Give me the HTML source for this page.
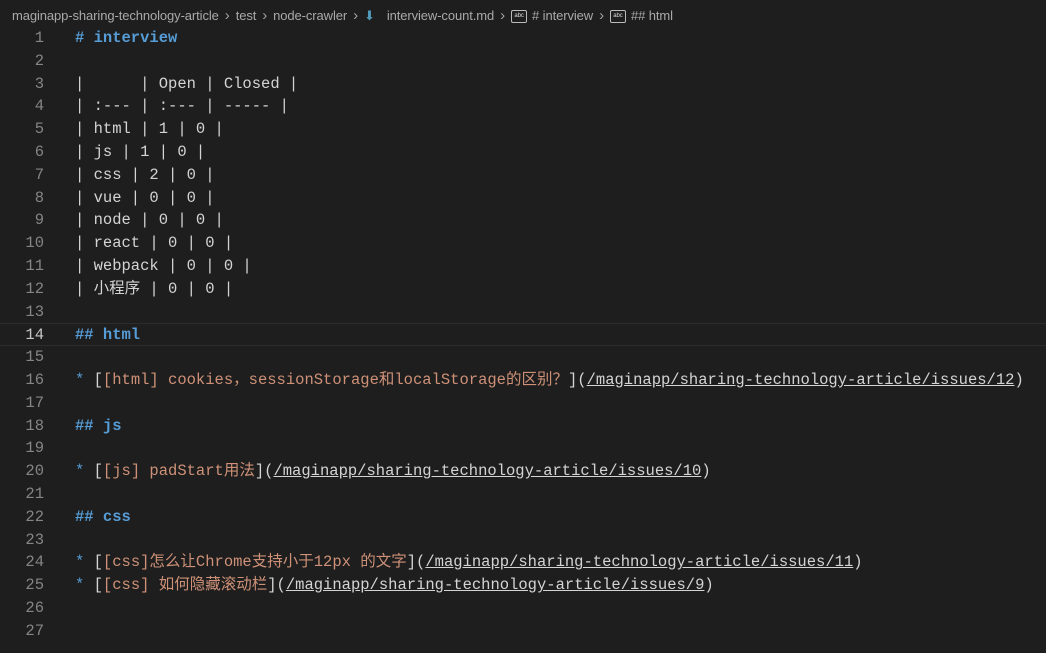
<!DOCTYPE html>
<html><head><meta charset="utf-8"><style>
html,body{margin:0;padding:0;background:#1e1e1e;width:1046px;height:653px;overflow:hidden}
.bc{position:absolute;top:0;left:0;height:30px;width:1046px;font:13px "Liberation Sans",sans-serif;color:#a9a9a9;line-height:31px;padding-left:12px;white-space:nowrap;letter-spacing:-0.1px}
.bc .s{margin:0 6px;color:#a0a0a0;font-size:15px}
.ab{display:inline-block;width:14px;height:11px;border:1px solid #bbb;border-radius:2px;font-size:6px;line-height:11px;text-align:center;vertical-align:middle;margin-right:5px;color:#ddd}
.ed{position:absolute;top:27px;left:0;font:15.5px "Liberation Mono","Noto Sans CJK SC",monospace;}
.l{height:22.8px;line-height:22.8px;position:relative;white-space:pre;color:#d4d4d4}
.n{position:absolute;left:0;width:44px;text-align:right;color:#858585}
.t{position:absolute;left:75px}
.cur{border-top:1px solid #2c2c2c;border-bottom:1px solid #2c2c2c;box-sizing:border-box;width:1046px}
.cur .n{color:#c6c6c6}
.h{color:#569cd6;font-weight:bold}
.o{color:#ce9178}
.u{text-decoration:underline}
.b{color:#569cd6}
</style></head><body>
<div class="bc">maginapp-sharing-technology-article<span class="s">›</span>test<span class="s">›</span>node-crawler<span class="s">›</span><span style="color:#519aba;margin-right:12px">⬇</span>interview-count.md<span class="s">›</span><span class="ab">abc</span># interview<span class="s">›</span><span class="ab">abc</span>## html</div>
<div class="ed">
<div class="l"><span class="n">1</span><span class="t h"># interview</span></div>
<div class="l"><span class="n">2</span></div>
<div class="l"><span class="n">3</span><span class="t">|      | Open | Closed |</span></div>
<div class="l"><span class="n">4</span><span class="t">| :--- | :--- | ----- |</span></div>
<div class="l"><span class="n">5</span><span class="t">| html | 1 | 0 |</span></div>
<div class="l"><span class="n">6</span><span class="t">| js | 1 | 0 |</span></div>
<div class="l"><span class="n">7</span><span class="t">| css | 2 | 0 |</span></div>
<div class="l"><span class="n">8</span><span class="t">| vue | 0 | 0 |</span></div>
<div class="l"><span class="n">9</span><span class="t">| node | 0 | 0 |</span></div>
<div class="l"><span class="n">10</span><span class="t">| react | 0 | 0 |</span></div>
<div class="l"><span class="n">11</span><span class="t">| webpack | 0 | 0 |</span></div>
<div class="l"><span class="n">12</span><span class="t">| 小程序 | 0 | 0 |</span></div>
<div class="l"><span class="n">13</span></div>
<div class="l cur"><span class="n">14</span><span class="t h">## html</span></div>
<div class="l"><span class="n">15</span></div>
<div class="l"><span class="n">16</span><span class="t"><span class="b">*</span> [<span class="o">[html] cookies，sessionStorage和localStorage的区别？</span>](<span class="u">/maginapp/sharing-technology-article/issues/12</span>)</span></div>
<div class="l"><span class="n">17</span></div>
<div class="l"><span class="n">18</span><span class="t h">## js</span></div>
<div class="l"><span class="n">19</span></div>
<div class="l"><span class="n">20</span><span class="t"><span class="b">*</span> [<span class="o">[js] padStart用法</span>](<span class="u">/maginapp/sharing-technology-article/issues/10</span>)</span></div>
<div class="l"><span class="n">21</span></div>
<div class="l"><span class="n">22</span><span class="t h">## css</span></div>
<div class="l"><span class="n">23</span></div>
<div class="l"><span class="n">24</span><span class="t"><span class="b">*</span> [<span class="o">[css]怎么让Chrome支持小于12px 的文字</span>](<span class="u">/maginapp/sharing-technology-article/issues/11</span>)</span></div>
<div class="l"><span class="n">25</span><span class="t"><span class="b">*</span> [<span class="o">[css] 如何隐藏滚动栏</span>](<span class="u">/maginapp/sharing-technology-article/issues/9</span>)</span></div>
<div class="l"><span class="n">26</span></div>
<div class="l"><span class="n">27</span></div>
</div>
</body></html>
